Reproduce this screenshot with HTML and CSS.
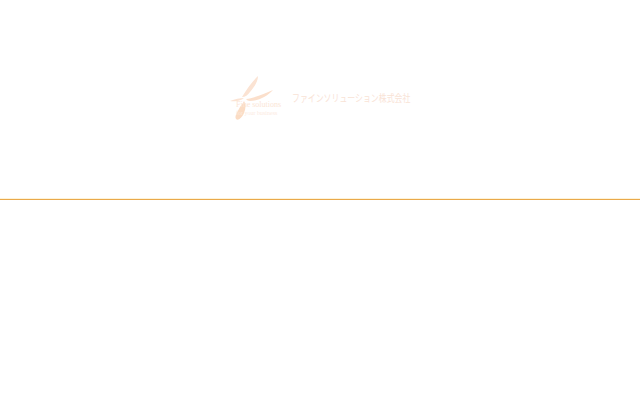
FILE: index.html
```html
<!DOCTYPE html>
<html lang="ja">
<head>
<meta charset="utf-8">
<title>ファインソリューション株式会社</title>
<link rel="stylesheet" href="styles.css">
</head>
<body>
<header class="top">
  <div class="logo">
    <div class="mark">
      <svg class="petals" width="58" height="46" viewBox="0 0 58 46" aria-hidden="true">
        <path d="M12 22C17 14 22 7 28 1C28 7 24 12 20 17C18 20 15 22 12 22Z" fill="#fbe3d3"/>
        <path d="M0 26C5 24 10 23 14 23C12 25 6 27 0 26Z" fill="#fbe3d3"/>
        <path d="M16 24C24 23 34 19 43 15C38 21 28 26 20 26C18 26 17 25 16 24Z" fill="#fbdfcb"/>
        <path d="M14 26C16 29 16 33 14 38C12 43 8 46 6 44C4 41 8 36 10 32C12 30 13 28 14 26Z" fill="#fbdcc4"/>
      </svg>
      <div class="tag">
        <span class="tag-one">Fine solutions</span>
        <span class="tag-two">for your business</span>
      </div>
    </div>
    <div class="name"><span class="name-in">ファインソリューション株式会社</span></div>
  </div>
</header>
<div class="rule"></div>
</body>
</html>
```
FILE: styles.css
```css
html, body {
  margin: 0;
  padding: 0;
  background: #fff;
}
.top {
  height: 198px;
  display: flex;
  align-items: flex-start;
  justify-content: center;
  padding-top: 0;
}
.logo {
  margin-top: 75px;
  display: flex;
  align-items: flex-start;
  width: 180px;
}
.mark {
  width: 62px;
  flex: none;
  position: relative;
  height: 46px;
}
.petals {
  display: block;
}
.tag {
  position: absolute;
  left: 6px;
  top: 25px;
  display: flex;
  flex-direction: column;
  gap: 1px;
  font-family: "Liberation Serif", serif;
  white-space: nowrap;
  color: #fbe6d6;
}
.tag-one {
  font-size: 8px;
  line-height: 9px;
}
.tag-two {
  font-size: 6px;
  line-height: 7px;
  color: #fcebdf;
}
.name {
  margin-top: 16px;
  font-family: "Noto Sans CJK JP", sans-serif;
  font-size: 10px;
  line-height: 14px;
  color: #f9e3d6;
  white-space: nowrap;
}
.name-in {
  display: inline-block;
  transform: scaleX(.79);
  transform-origin: left center;
}
.rule {
  height: 1px;
  margin-top: 1px;
  background: #eaa94a;
  box-shadow: 0 -1px 0 #fdf3d9, 0 1px 0 #fdf3d9;
}
```
